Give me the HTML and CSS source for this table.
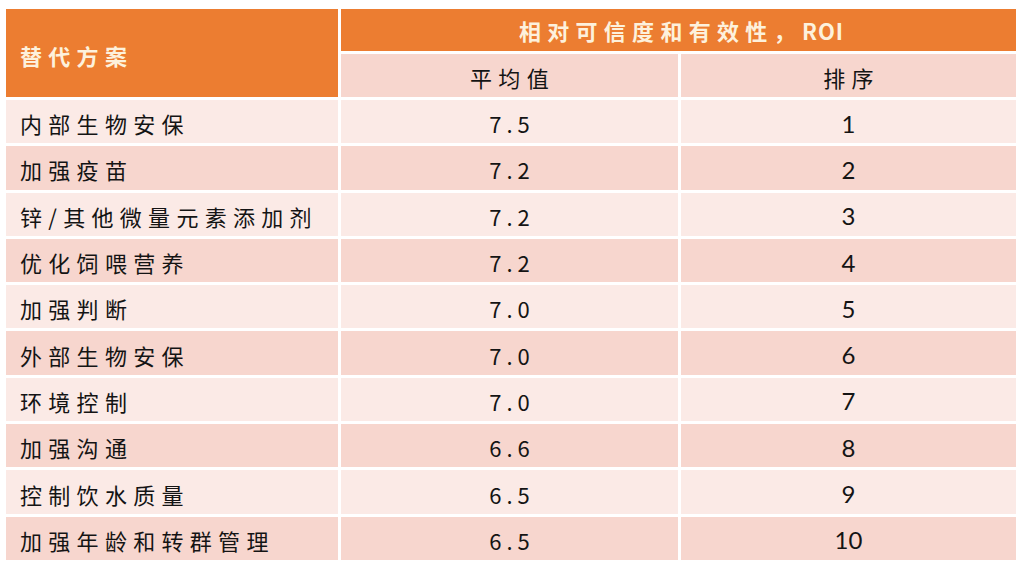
FILE: index.html
```html
<!DOCTYPE html>
<html lang="zh-CN">
<head>
<meta charset="utf-8">
<title>替代方案</title>
<link rel="stylesheet" href="styles.css">
</head>
<body>
<div class="table">
  <div class="cell head head-left">替代方案</div>
  <div class="cell head head-top">相对可信度和有效性，<span class="latin">ROI</span></div>
  <div class="cell sub">平均值</div>
  <div class="cell sub">排序</div>

  <div class="cell name odd">内部生物安保</div><div class="cell val odd">7.5</div><div class="cell rank odd">1</div>
  <div class="cell name even">加强疫苗</div><div class="cell val even">7.2</div><div class="cell rank even">2</div>
  <div class="cell name odd">锌/其他微量元素添加剂</div><div class="cell val odd">7.2</div><div class="cell rank odd">3</div>
  <div class="cell name even">优化饲喂营养</div><div class="cell val even">7.2</div><div class="cell rank even">4</div>
  <div class="cell name odd">加强判断</div><div class="cell val odd">7.0</div><div class="cell rank odd">5</div>
  <div class="cell name even">外部生物安保</div><div class="cell val even">7.0</div><div class="cell rank even">6</div>
  <div class="cell name odd">环境控制</div><div class="cell val odd">7.0</div><div class="cell rank odd">7</div>
  <div class="cell name even">加强沟通</div><div class="cell val even">6.6</div><div class="cell rank even">8</div>
  <div class="cell name odd">控制饮水质量</div><div class="cell val odd">6.5</div><div class="cell rank odd">9</div>
  <div class="cell name even">加强年龄和转群管理</div><div class="cell val even">6.5</div><div class="cell rank even">10</div>
</div>
</body>
</html>
```
FILE: styles.css
```css
html, body {
  margin: 0;
  padding: 0;
  background: #ffffff;
}
body {
  padding: 9px 0 0 6px;
  font-family: "Noto Sans CJK SC", "Noto Sans", sans-serif;
  color: #141414;
}
.table {
  display: grid;
  grid-template-columns: 332px 337px 335px;
  grid-template-rows: 42px 43px;
  grid-auto-rows: 43.3px;
  gap: 3px;
  width: 1010px;
}
.cell {
  display: flex;
  align-items: center;
  font-size: 22px;
  letter-spacing: 6.3px;
  padding-top: 3px;
  box-sizing: border-box;
}
.head {
  background: #ec7d31;
  color: #fdf1dc;
  font-weight: 700;
}
.head-left {
  grid-row: span 2;
  padding-left: 14px;
}
.head-top {
  grid-column: span 2;
  justify-content: center;
  padding-top: 0;
  padding-left: 6px;
}
.latin {
  letter-spacing: 1px;
}
.sub {
  background: #f7d6ce;
  justify-content: center;
  padding-left: 6px;
}
.odd { background: #fbeae6; }
.even { background: #f7d6ce; }
.name {
  padding-left: 14px;
}
.val {
  justify-content: center;
  padding-left: 5px;
  letter-spacing: 5px;
}
.rank {
  justify-content: center;
  font-family: Lato, "Liberation Sans", sans-serif;
  font-size: 24px;
  letter-spacing: 0;
}
```
